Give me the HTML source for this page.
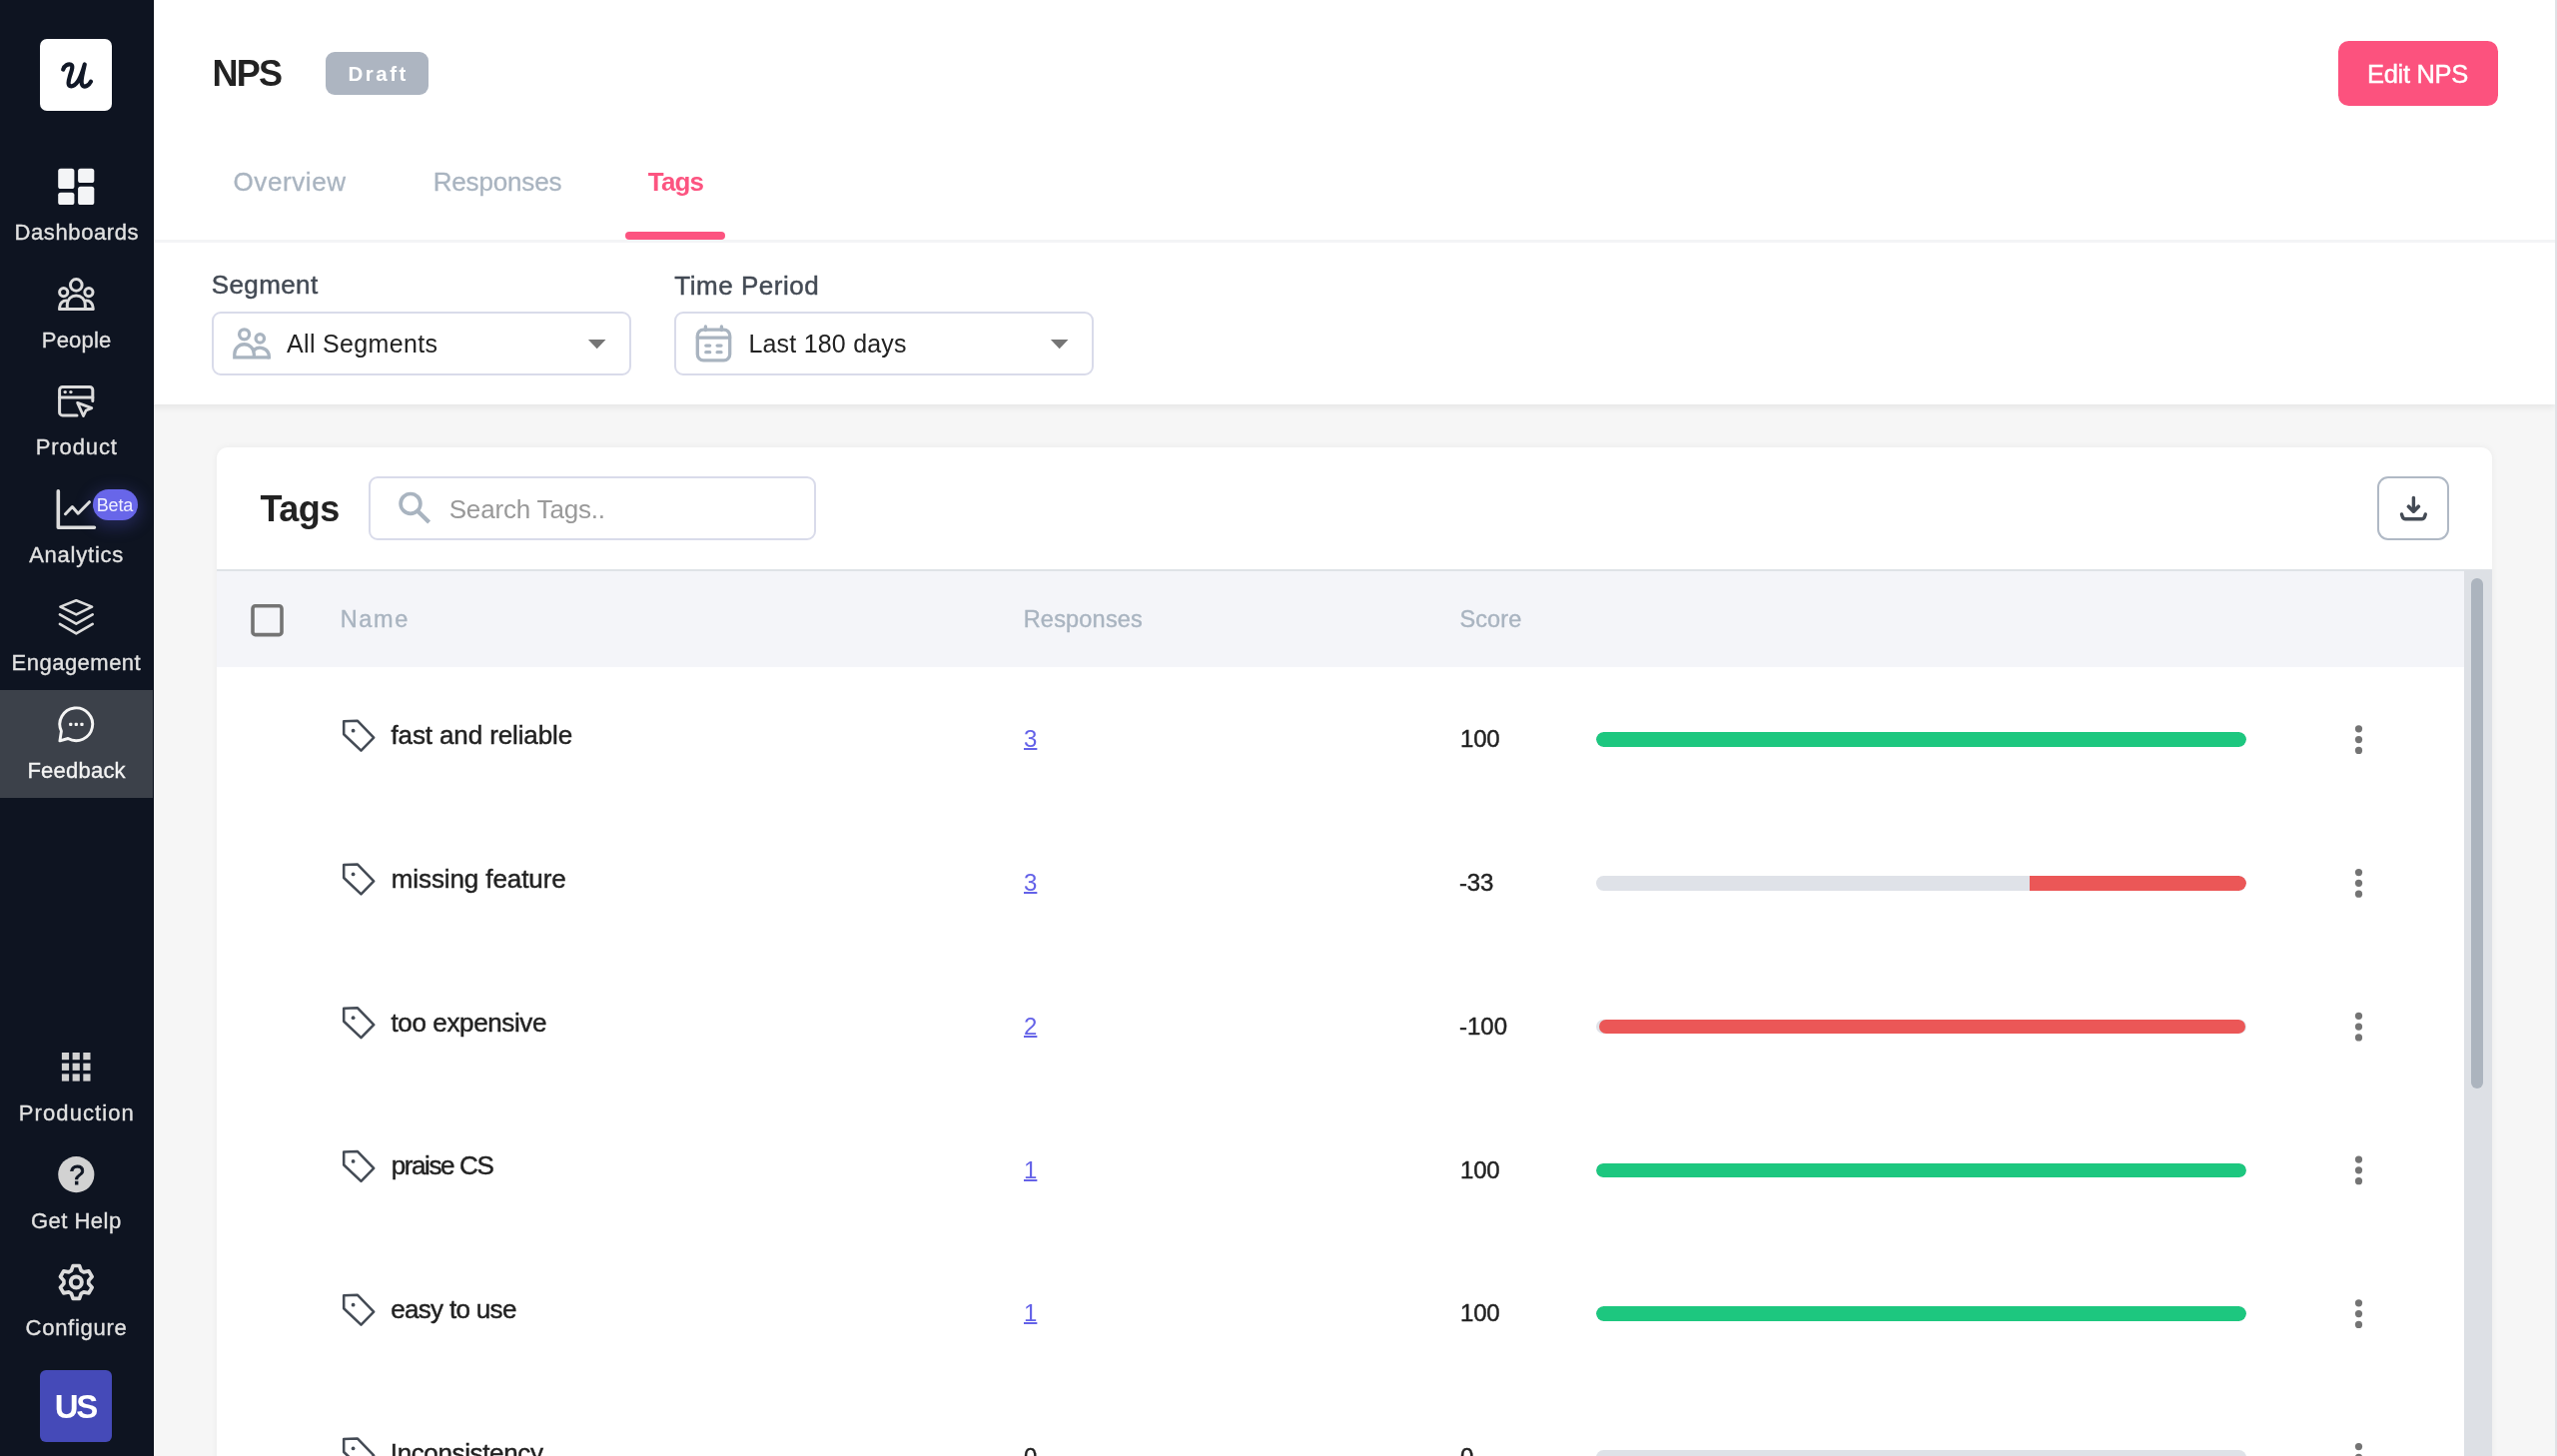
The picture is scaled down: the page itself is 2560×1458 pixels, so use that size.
<!DOCTYPE html>
<html lang="en">
<head>
<meta charset="utf-8">
<title>NPS - Tags</title>
<style>
*{box-sizing:border-box;margin:0;padding:0}
html,body{width:2560px;height:1458px;overflow:hidden;background:#f6f6f6;font-family:"Liberation Sans",sans-serif;color:#222}
.t{position:absolute;white-space:nowrap;line-height:1;font-weight:400;font-style:normal;margin:0}
a.t{cursor:pointer}
#txt{position:absolute;left:0;top:0;width:2560px;height:1458px;will-change:transform}
svg.layer{position:absolute;left:0;top:0;width:2560px;height:1458px;overflow:visible;pointer-events:none}
#side{position:absolute;left:0;top:0;width:154.4px;height:1458px;background:#0e1421;border-right:1.4px solid #050b17}
#side .logo{position:absolute;left:40.3px;top:39.3px;width:72px;height:72px;border-radius:7px;background:#fff}
#side .active{position:absolute;left:0;top:691px;width:153px;height:107.8px;background:#3c414a}
#side .beta{position:absolute;left:93px;top:490px;width:45px;height:31px;border-radius:16px;background:#6866e9;box-shadow:0 4px 16px 3px rgba(92,92,220,.27)}
#side .avatar{position:absolute;left:40.2px;top:1371.8px;width:72px;height:72.2px;border-radius:6px;background:#454ab8}
#head{position:absolute;left:100px;top:0;width:2458px;height:404.8px;background:#fff;box-shadow:0 4px 6px rgba(0,0,0,.06)}
#rstrip{position:absolute;left:2558px;top:0;width:2px;height:1458px;background:#dfe2e6}
#hline{position:absolute;left:154px;top:240px;width:2404px;height:3.2px;background:#f3f4f6}
.badge{position:absolute;left:326px;top:52px;width:103px;height:43px;border-radius:9px;background:#adb5c1}
.btn{position:absolute;left:2341px;top:41px;width:159.8px;height:65px;border-radius:10.5px;background:#fc527e}
.tabline{position:absolute;left:626.3px;top:232px;width:100px;height:8px;border-radius:4px;background:#fc5480}
.box{position:absolute;height:64px;border:2px solid #d9dbea;border-radius:9px;background:#fff}
#card{position:absolute;left:217px;top:448px;width:2278px;height:1030px;background:#fff;border-radius:11px;box-shadow:0 0 7px rgba(0,0,0,.05);overflow:hidden}
#card .hl{position:absolute;left:0;top:122px;width:2278px;height:2px;background:#dfe3e7}
#card .th{position:absolute;left:0;top:124px;width:2250px;height:96px;background:#f4f5f9}
#card .track{position:absolute;left:2250px;top:123px;width:28px;height:910px;background:#dde0e5}
#card .thumb{position:absolute;left:2257px;top:131px;width:12px;height:511px;border-radius:6px;background:#acb4be}
.dl{position:absolute;left:2380.2px;top:476.5px;width:72px;height:64.5px;border:2px solid #b0b9c5;border-radius:11px;background:#fff}
.bar{position:absolute;left:1597.5px;width:651px;height:14.6px;border-radius:8px;background:#dfe2e8;overflow:hidden}
.bar i{position:absolute;top:0;height:100%;border-radius:8px}
</style>
</head>
<body>
<div id="head"></div>
<div id="hline"></div>
<div id="rstrip"></div>
<div id="side">
  <div class="logo"></div>
  <div class="active"></div>
  <div class="beta"></div>
  <div class="avatar"></div>
</div>
<div class="badge"></div>
<div class="btn"></div>
<div class="tabline"></div>
<div class="box" style="left:212px;top:311.5px;width:420px;height:64.5px"></div>
<div class="box" style="left:675px;top:311.5px;width:420px;height:64.5px"></div>
<div id="card">
  <div class="hl"></div>
  <div class="th"></div>
  <div class="track"></div>
  <div class="thumb"></div>
</div>
<div class="box" style="left:369px;top:476.5px;width:448px;height:64.5px"></div>
<div class="dl"></div>
<div class="bar" style="top:733.40px"><i style="left:0;width:651px;background:#1dc77f"></i></div>
<div class="bar" style="top:877.15px"><i style="left:434.5px;width:216.5px;background:#eb5757;border-radius:0 8px 8px 0"></i></div>
<div class="bar" style="top:1020.90px"><i style="left:3.4px;width:647.6px;background:#eb5757"></i></div>
<div class="bar" style="top:1164.65px"><i style="left:0;width:651px;background:#1dc77f"></i></div>
<div class="bar" style="top:1308.40px"><i style="left:0;width:651px;background:#1dc77f"></i></div>
<div class="bar" style="top:1452.15px"></div>
<svg class="layer" viewBox="0 0 2560 1458">
<path d="M63.2 69.6 C64.5 65.5 68.5 63.5 71 64.6 C73.8 66 71.5 71 70 76 C68.5 81 67.2 86.3 71.3 86.3 C76.5 86.3 81 78 84.8 64.4 C83.5 70 81.5 78 81.6 82 C81.7 86.5 84.3 87.2 86.8 86 C88.8 85 90.2 83.2 91 81.6" fill="none" stroke="#111827" stroke-width="4.2" stroke-linecap="round" stroke-linejoin="round"/>
<rect x="58.2" y="168.8" width="16.2" height="20.2" rx="2.6" fill="#f3f4f6"/>
<rect x="78.1" y="168.8" width="16.2" height="14.2" rx="2.6" fill="#f3f4f6"/>
<rect x="58.2" y="192.7" width="16.2" height="12.3" rx="2.6" fill="#f3f4f6"/>
<rect x="78.1" y="186.7" width="16.2" height="18.3" rx="2.6" fill="#f3f4f6"/>
<g fill="none" stroke="#dcdcdc" stroke-width="3" stroke-linecap="round" stroke-linejoin="round"><circle cx="76.3" cy="285.4" r="5.8"/><circle cx="63.7" cy="292.6" r="4.1"/><circle cx="88.9" cy="292.6" r="4.1"/><path d="M59.7 309.5H93"/><path d="M67.3 309.5V304.9a9 9 0 0 1 18 0V309.5"/><path d="M59.7 309.5V307.6A6.6 6.6 0 0 1 66.6 301"/><path d="M93 309.5V307.6A6.6 6.6 0 0 0 86 301"/></g>
<g fill="none" stroke="#dcdcdc" stroke-width="3" stroke-linecap="round" stroke-linejoin="round"><path d="M77 415.9H62.6a3 3 0 0 1-3-3V390.5a3 3 0 0 1 3-3H89.8a3 3 0 0 1 3 3V401.6"/><path d="M59.6 398H92.8"/><path stroke-width="2.8" d="M77.6 403.4L91.8 408.6L86.1 411L83.5 416.5Z"/></g><circle cx="65.2" cy="392.6" r="1.7" fill="#dcdcdc"/><circle cx="70.9" cy="392.6" r="1.7" fill="#dcdcdc"/>
<g fill="none" stroke="#dcdcdc" stroke-linecap="round" stroke-linejoin="round"><path stroke-width="3.6" d="M58.3 491.8V528.2H94.4"/><path stroke-width="3" d="M65.5 514.7L72.4 507.5L78.2 514.2L89.5 502.7"/></g>
<g fill="none" stroke="#dcdcdc" stroke-width="2.6" stroke-linecap="round" stroke-linejoin="round"><path d="M76.3 601.2L92.1 607.6L76.3 615.4L60.4 607.6Z"/><path d="M59.9 615.4L76.3 624.7L92.7 615.4"/><path d="M59.9 624.9L76.3 634.4L92.7 624.9"/></g>
<g fill="none" stroke="#f5f5f5" stroke-width="2.9" stroke-linecap="round" stroke-linejoin="round"><path d="M68.1 739.5A16.4 16.4 0 1 0 61.4 732.2L59.9 741.9Z"/></g><g fill="#f5f5f5"><rect x="69.1" y="723.7" width="3.3" height="3.3" rx="1"/><rect x="74.65" y="723.7" width="3.3" height="3.3" rx="1"/><rect x="80.3" y="723.7" width="3.3" height="3.3" rx="1"/></g>
<rect x="61.9" y="1054.0" width="7.2" height="7.2" fill="#d2d2d2"/>
<rect x="72.6" y="1054.0" width="7.2" height="7.2" fill="#d2d2d2"/>
<rect x="83.3" y="1054.0" width="7.2" height="7.2" fill="#d2d2d2"/>
<rect x="61.9" y="1064.7" width="7.2" height="7.2" fill="#d2d2d2"/>
<rect x="72.6" y="1064.7" width="7.2" height="7.2" fill="#d2d2d2"/>
<rect x="83.3" y="1064.7" width="7.2" height="7.2" fill="#d2d2d2"/>
<rect x="61.9" y="1075.4" width="7.2" height="7.2" fill="#d2d2d2"/>
<rect x="72.6" y="1075.4" width="7.2" height="7.2" fill="#d2d2d2"/>
<rect x="83.3" y="1075.4" width="7.2" height="7.2" fill="#d2d2d2"/>
<circle cx="76.3" cy="1176.1" r="18.1" fill="#d2d2d2"/>
<path d="M71.4 1272.4 L73.1 1267.5 L79.5 1267.5 L81.2 1272.4 L83.8 1273.9 L88.9 1272.9 L92.1 1278.5 L88.7 1282.4 L88.7 1285.4 L92.1 1289.3 L88.9 1294.9 L83.8 1293.9 L81.2 1295.4 L79.5 1300.3 L73.1 1300.3 L71.4 1295.4 L68.8 1293.9 L63.7 1294.9 L60.5 1289.3 L63.9 1285.4 L63.9 1282.4 L60.5 1278.5 L63.7 1272.9 L68.8 1273.9Z" fill="none" stroke="#dcdcdc" stroke-width="3.7" stroke-linejoin="round"/><circle cx="76.3" cy="1283.9" r="5.5" fill="none" stroke="#dcdcdc" stroke-width="4"/>
<g fill="none" stroke="#a9b4c0" stroke-width="3.3"><circle cx="244.6" cy="334.8" r="5"/><circle cx="260.3" cy="338.9" r="4.2"/><path d="M234.8 359.5V354.5a9.75 9.75 0 0 1 19.5 0V357.9H234.8H269.4"/><path d="M253.3 351.6A9.1 9.1 0 0 1 269.4 357.5V359.5"/></g>
<g fill="none" stroke="#a9b4c0" stroke-width="3.3" stroke-linecap="round"><rect x="698.3" y="330.1" width="32.4" height="30.7" rx="6"/><path d="M698.3 338.1H730.7M706.4 327V330.5M722.4 327V330.5M706.8 346.1H710.7M718.1 346.1H722M706.8 352.7H710.7M718.1 352.7H722"/></g>
<path d="M588.9 340.1H606.5L597.7 349.3Z" fill="#757575"/><path d="M1051.9 340.1H1069.5L1060.7 349.3Z" fill="#757575"/>
<g fill="none" stroke="#a9b4c0"><circle cx="411" cy="504.4" r="9.9" stroke-width="3.7"/><path d="M418.4 512L429.6 523" stroke-width="4.2"/></g>
<g fill="none" stroke="#444b55" stroke-width="3.4" stroke-linecap="round" stroke-linejoin="round"><path d="M2416.4 498.5V511.6"/><path d="M2411.5 507.2L2416.4 512.1L2421.3 507.2" stroke-width="3.7"/><path d="M2404.5 514.9L2405.3 517.6Q2406 519.8 2408.4 519.8H2424.4Q2426.8 519.8 2427.5 517.6L2428.3 514.9"/></g>
<rect x="253" y="606.8" width="29" height="28.8" rx="2.6" fill="none" stroke="#747474" stroke-width="3.6"/>
<g transform="translate(0 0.00)"><path d="M344.2 722.3L358 721.8L374.2 738.7L361.5 751.6L344.2 735.2Z" fill="none" stroke="#444b55" stroke-width="2.55" stroke-linejoin="round"/><circle cx="353.6" cy="731.7" r="1.9" fill="#444b55"/><g fill="#747474"><circle cx="2361.5" cy="729.8" r="3.6"/><circle cx="2361.5" cy="740.6" r="3.6"/><circle cx="2361.5" cy="751.4" r="3.6"/></g></g>
<g transform="translate(0 143.75)"><path d="M344.2 722.3L358 721.8L374.2 738.7L361.5 751.6L344.2 735.2Z" fill="none" stroke="#444b55" stroke-width="2.55" stroke-linejoin="round"/><circle cx="353.6" cy="731.7" r="1.9" fill="#444b55"/><g fill="#747474"><circle cx="2361.5" cy="729.8" r="3.6"/><circle cx="2361.5" cy="740.6" r="3.6"/><circle cx="2361.5" cy="751.4" r="3.6"/></g></g>
<g transform="translate(0 287.50)"><path d="M344.2 722.3L358 721.8L374.2 738.7L361.5 751.6L344.2 735.2Z" fill="none" stroke="#444b55" stroke-width="2.55" stroke-linejoin="round"/><circle cx="353.6" cy="731.7" r="1.9" fill="#444b55"/><g fill="#747474"><circle cx="2361.5" cy="729.8" r="3.6"/><circle cx="2361.5" cy="740.6" r="3.6"/><circle cx="2361.5" cy="751.4" r="3.6"/></g></g>
<g transform="translate(0 431.25)"><path d="M344.2 722.3L358 721.8L374.2 738.7L361.5 751.6L344.2 735.2Z" fill="none" stroke="#444b55" stroke-width="2.55" stroke-linejoin="round"/><circle cx="353.6" cy="731.7" r="1.9" fill="#444b55"/><g fill="#747474"><circle cx="2361.5" cy="729.8" r="3.6"/><circle cx="2361.5" cy="740.6" r="3.6"/><circle cx="2361.5" cy="751.4" r="3.6"/></g></g>
<g transform="translate(0 575.00)"><path d="M344.2 722.3L358 721.8L374.2 738.7L361.5 751.6L344.2 735.2Z" fill="none" stroke="#444b55" stroke-width="2.55" stroke-linejoin="round"/><circle cx="353.6" cy="731.7" r="1.9" fill="#444b55"/><g fill="#747474"><circle cx="2361.5" cy="729.8" r="3.6"/><circle cx="2361.5" cy="740.6" r="3.6"/><circle cx="2361.5" cy="751.4" r="3.6"/></g></g>
<g transform="translate(0 718.75)"><path d="M344.2 722.3L358 721.8L374.2 738.7L361.5 751.6L344.2 735.2Z" fill="none" stroke="#444b55" stroke-width="2.55" stroke-linejoin="round"/><circle cx="353.6" cy="731.7" r="1.9" fill="#444b55"/><g fill="#747474"><circle cx="2361.5" cy="729.8" r="3.6"/><circle cx="2361.5" cy="740.6" r="3.6"/><circle cx="2361.5" cy="751.4" r="3.6"/></g></g>
</svg>
<div id="txt">
<span class="t" style="left:14.5px;top:222.1px;font-size:22px;color:#e2e2e2;letter-spacing:0.61px;-webkit-text-stroke:0.35px #e2e2e2">Dashboards</span>
<span class="t" style="left:41.8px;top:329.6px;font-size:22px;color:#e2e2e2;letter-spacing:0.20px;-webkit-text-stroke:0.35px #e2e2e2">People</span>
<span class="t" style="left:35.8px;top:437.3px;font-size:22px;color:#e2e2e2;letter-spacing:0.88px;-webkit-text-stroke:0.35px #e2e2e2">Product</span>
<span class="t" style="left:29.2px;top:545.3px;font-size:22px;color:#e2e2e2;letter-spacing:0.76px;-webkit-text-stroke:0.35px #e2e2e2">Analytics</span>
<span class="t" style="left:11.6px;top:653.2px;font-size:22px;color:#e2e2e2;letter-spacing:0.48px;-webkit-text-stroke:0.35px #e2e2e2">Engagement</span>
<span class="t" style="left:27.4px;top:760.7px;font-size:22px;color:#f4f4f4;letter-spacing:0.23px;-webkit-text-stroke:0.35px #f4f4f4">Feedback</span>
<span class="t" style="left:18.8px;top:1104.0px;font-size:22px;color:#e2e2e2;letter-spacing:1.09px;-webkit-text-stroke:0.35px #e2e2e2">Production</span>
<span class="t" style="left:30.9px;top:1211.6px;font-size:22px;color:#e2e2e2;letter-spacing:0.49px;-webkit-text-stroke:0.35px #e2e2e2">Get Help</span>
<span class="t" style="left:25.6px;top:1319.3px;font-size:22px;color:#e2e2e2;letter-spacing:0.71px;-webkit-text-stroke:0.35px #e2e2e2">Configure</span>
<span class="t" style="left:96.7px;top:496.6px;font-size:18px;color:#f0f0ff;letter-spacing:-0.13px">Beta</span>
<span class="t" style="left:54.8px;top:1391.9px;font-size:33px;color:#fff;font-weight:700;letter-spacing:-2.30px">US</span>
<span class="t" style="left:69.4px;top:1162.6px;font-size:27.5px;color:#0e1421;-webkit-text-stroke:0.8px #0e1421">?</span>
<h1 class="t" style="left:212.5px;top:56.4px;font-size:36px;color:#222;font-weight:700;letter-spacing:-1.70px">NPS</h1>
<span class="t" style="left:348.4px;top:64.4px;font-size:20.5px;color:#fff;font-weight:700;letter-spacing:2.53px">Draft</span>
<span class="t" style="left:233.5px;top:169.0px;font-size:26px;color:#a9b4c0;letter-spacing:0.60px;-webkit-text-stroke:0.3px #a9b4c0">Overview</span>
<span class="t" style="left:433.7px;top:169.0px;font-size:26px;color:#a9b4c0;letter-spacing:-0.16px;-webkit-text-stroke:0.3px #a9b4c0">Responses</span>
<span class="t" style="left:648.8px;top:169.0px;font-size:26px;color:#fc5480;font-weight:700;letter-spacing:-0.83px">Tags</span>
<span class="t" style="left:211.7px;top:272.4px;font-size:26px;color:#434a54;letter-spacing:0.40px;-webkit-text-stroke:0.45px #434a54">Segment</span>
<span class="t" style="left:675.3px;top:272.5px;font-size:26px;color:#434a54;letter-spacing:0.53px;-webkit-text-stroke:0.45px #434a54">Time Period</span>
<span class="t" style="left:287.0px;top:331.6px;font-size:25px;color:#222;letter-spacing:0.33px">All Segments</span>
<span class="t" style="left:749.4px;top:331.6px;font-size:25px;color:#222;letter-spacing:0.21px">Last 180 days</span>
<span class="t" style="left:2370.1px;top:61.9px;font-size:25.5px;color:#fff;letter-spacing:-0.33px;-webkit-text-stroke:0.4px #fff">Edit NPS</span>
<h2 class="t" style="left:260.5px;top:492.1px;font-size:36px;color:#222;font-weight:700;letter-spacing:-0.50px">Tags</h2>
<span class="t" style="left:449.7px;top:497.0px;font-size:26px;color:#999;letter-spacing:-0.18px">Search Tags..</span>
<span class="t" style="left:340.7px;top:609.4px;font-size:23.5px;color:#a9b4c0;letter-spacing:1.67px;-webkit-text-stroke:0.4px #a9b4c0">Name</span>
<span class="t" style="left:1024.7px;top:609.4px;font-size:23.5px;color:#a9b4c0;letter-spacing:0.20px;-webkit-text-stroke:0.4px #a9b4c0">Responses</span>
<span class="t" style="left:1461.4px;top:609.4px;font-size:23.5px;color:#a9b4c0;letter-spacing:0.15px;-webkit-text-stroke:0.4px #a9b4c0">Score</span>
<span class="t" style="left:391.5px;top:723.0px;font-size:26px;color:#222;letter-spacing:-0.12px;-webkit-text-stroke:0.45px #222">fast and reliable</span>
<a class="t" style="left:1025.0px;top:728.3px;font-size:24px;color:#6462e8;text-decoration:underline;text-decoration-thickness:2px;text-underline-offset:1.2px;text-decoration-skip-ink:none">3</a>
<span class="t" style="left:1462.1px;top:728.4px;font-size:24px;color:#222;letter-spacing:-0.30px;-webkit-text-stroke:0.45px #222">100</span>
<span class="t" style="left:391.8px;top:866.7px;font-size:26px;color:#222;letter-spacing:-0.10px;-webkit-text-stroke:0.45px #222">missing feature</span>
<a class="t" style="left:1025.0px;top:872.0px;font-size:24px;color:#6462e8;text-decoration:underline;text-decoration-thickness:2px;text-underline-offset:1.2px;text-decoration-skip-ink:none">3</a>
<span class="t" style="left:1461.0px;top:872.1px;font-size:24px;color:#222;letter-spacing:-0.15px;-webkit-text-stroke:0.45px #222">-33</span>
<span class="t" style="left:391.5px;top:1010.5px;font-size:26px;color:#222;letter-spacing:-0.38px;-webkit-text-stroke:0.45px #222">too expensive</span>
<a class="t" style="left:1025.0px;top:1015.8px;font-size:24px;color:#6462e8;text-decoration:underline;text-decoration-thickness:2px;text-underline-offset:1.2px;text-decoration-skip-ink:none">2</a>
<span class="t" style="left:1461.0px;top:1015.9px;font-size:24px;color:#222;-webkit-text-stroke:0.45px #222">-100</span>
<span class="t" style="left:391.7px;top:1154.2px;font-size:26px;color:#222;letter-spacing:-1.39px;-webkit-text-stroke:0.45px #222">praise CS</span>
<a class="t" style="left:1025.0px;top:1159.5px;font-size:24px;color:#6462e8;text-decoration:underline;text-decoration-thickness:2px;text-underline-offset:1.2px;text-decoration-skip-ink:none">1</a>
<span class="t" style="left:1462.1px;top:1159.6px;font-size:24px;color:#222;letter-spacing:-0.30px;-webkit-text-stroke:0.45px #222">100</span>
<span class="t" style="left:391.2px;top:1298.0px;font-size:26px;color:#222;letter-spacing:-0.68px;-webkit-text-stroke:0.45px #222">easy to use</span>
<a class="t" style="left:1025.0px;top:1303.3px;font-size:24px;color:#6462e8;text-decoration:underline;text-decoration-thickness:2px;text-underline-offset:1.2px;text-decoration-skip-ink:none">1</a>
<span class="t" style="left:1462.1px;top:1303.4px;font-size:24px;color:#222;letter-spacing:-0.30px;-webkit-text-stroke:0.45px #222">100</span>
<span class="t" style="left:390.8px;top:1441.7px;font-size:26px;color:#222;letter-spacing:-0.37px;-webkit-text-stroke:0.45px #222">Inconsistency</span>
<span class="t" style="left:1025.0px;top:1447.0px;font-size:24px;color:#222;-webkit-text-stroke:0.3px #222">0</span>
<span class="t" style="left:1462.1px;top:1447.1px;font-size:24px;color:#222;-webkit-text-stroke:0.45px #222">0</span>
</div>
</body>
</html>
